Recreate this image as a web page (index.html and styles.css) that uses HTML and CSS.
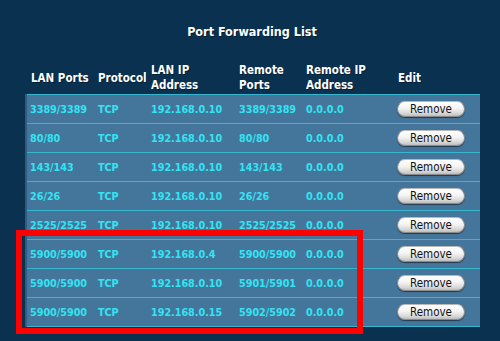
FILE: index.html
```html
<!DOCTYPE html>
<html>
<head>
<meta charset="utf-8">
<link rel="stylesheet" href="styles.css">
</head>
<body>
<div class="page">
  <h1 class="title">Port Forwarding List</h1>
  <div class="table-wrap">
    <table class="pf">
      <colgroup>
        <col class="c1"><col class="c2"><col class="c3"><col class="c4"><col class="c5"><col class="c6">
      </colgroup>
      <thead>
        <tr>
          <th>LAN Ports</th><th>Protocol</th><th>LAN IP<br>Address</th><th>Remote<br>Ports</th><th>Remote IP<br>Address</th><th class="edit">Edit</th>
        </tr>
      </thead>
      <tbody>
        <tr><td>3389/3389</td><td>TCP</td><td>192.168.0.10</td><td>3389/3389</td><td>0.0.0.0</td><td class="edit"><button class="btn">Remove</button></td></tr>
        <tr><td>80/80</td><td>TCP</td><td>192.168.0.10</td><td>80/80</td><td>0.0.0.0</td><td class="edit"><button class="btn">Remove</button></td></tr>
        <tr><td>143/143</td><td>TCP</td><td>192.168.0.10</td><td>143/143</td><td>0.0.0.0</td><td class="edit"><button class="btn">Remove</button></td></tr>
        <tr><td>26/26</td><td>TCP</td><td>192.168.0.10</td><td>26/26</td><td>0.0.0.0</td><td class="edit"><button class="btn">Remove</button></td></tr>
        <tr><td>2525/2525</td><td>TCP</td><td>192.168.0.10</td><td>2525/2525</td><td>0.0.0.0</td><td class="edit"><button class="btn">Remove</button></td></tr>
        <tr><td>5900/5900</td><td>TCP</td><td>192.168.0.4</td><td>5900/5900</td><td>0.0.0.0</td><td class="edit"><button class="btn">Remove</button></td></tr>
        <tr><td>5900/5900</td><td>TCP</td><td>192.168.0.10</td><td>5901/5901</td><td>0.0.0.0</td><td class="edit"><button class="btn">Remove</button></td></tr>
        <tr><td>5900/5900</td><td>TCP</td><td>192.168.0.15</td><td>5902/5902</td><td>0.0.0.0</td><td class="edit"><button class="btn">Remove</button></td></tr>
      </tbody>
    </table>
    <div class="highlight"></div>
  </div>
</div>
</body>
</html>
```
FILE: styles.css
```css
html, body {
  margin: 0;
  padding: 0;
  background: #0b3150;
  width: 500px;
  height: 341px;
  overflow: hidden;
}
.page {
  padding: 0 21px 0 25px;
  font-family: "DejaVu Sans Condensed", "DejaVu Sans", sans-serif;
  font-weight: bold;
  font-size: 10.7px;
}
.title {
  margin: 0;
  padding-top: 24px;
  height: 63px;
  box-sizing: border-box;
  text-align: center;
  color: #ffffff;
  font-size: 12.5px;
  line-height: 15px;
  font-weight: bold;
  text-shadow: 1px 1px 0 rgba(0,0,0,0.45);
}
.table-wrap {
  position: relative;
  width: 454px;
}
.pf {
  width: 454px;
  border-collapse: collapse;
  table-layout: fixed;
}
.c1 { width: 67px; }
.c2 { width: 53px; }
.c3 { width: 88px; }
.c4 { width: 67px; }
.c5 { width: 91px; }
.c6 { width: 88px; }
.pf th {
  color: #ffffff;
  text-align: left;
  font-size: 11.5px;
  font-weight: bold;
  height: 30px;
  padding: 0 0 1px 5px;
  line-height: 15px;
  vertical-align: middle;
  text-shadow: 1px 1px 0 rgba(0,0,0,0.4);
  white-space: nowrap;
}
.pf th.edit { padding-left: 6px; }
.pf tbody tr {
  background: #44769c;
}
.pf td {
  color: #33e4f2;
  height: 28px;
  padding: 0 0 0 5px;
  border-top: 1px solid #37b6cf;
  white-space: nowrap;
  vertical-align: middle;
}
.pf tbody tr:last-child td {
  border-bottom: 1px solid #37b6cf;
}
.pf td:first-child {
  border-left: 2px solid #2f5d80;
  padding-left: 3px;
}
.pf td.edit { padding-left: 5px; }
.btn {
  display: block;
  width: 68px;
  height: 16px;
  padding: 0;
  border: 1px solid #8a8a8a;
  border-top-color: #b8b8b8;
  border-radius: 8px;
  background: linear-gradient(#ffffff 0%, #f4f4f4 45%, #d8d8d8 80%, #bdbdbd 100%);
  box-shadow: 0 1px 1px rgba(0,0,0,0.5);
  color: #111111;
  font-family: "DejaVu Sans Condensed", "DejaVu Sans", sans-serif;
  font-size: 11.5px;
  font-weight: normal;
  line-height: 14px;
  text-align: center;
}
.highlight {
  position: absolute;
  left: -9px;
  top: 167px;
  width: 335px;
  height: 92px;
  border: 6px solid #ff0000;
}
```
